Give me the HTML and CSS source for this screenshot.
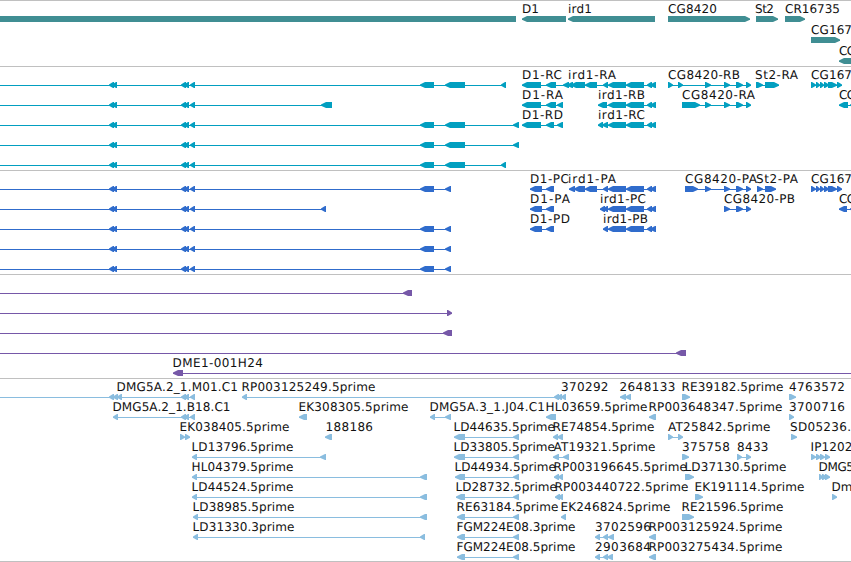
FILE: index.html
```html
<!DOCTYPE html>
<html lang="en">
<head>
  <meta charset="UTF-8" />
  <title>Genome Browser</title>
  <link rel="stylesheet" href="styles.css">
</head>
<body>

  <main class="browser">
    <section class="track genes" id="genes"></section>
    <section class="track transcripts" id="transcripts"></section>
    <section class="track proteins" id="proteins"></section>
    <section class="track clones" id="clones"></section>
    <section class="track ests" id="ests"></section>
  </main>

  <script src="tracks.js"></script>
</body>
</html>
```
FILE: styles.css
```css
body {
  margin: 0;
  background-color: #fff;
  font-family: 'DejaVu Sans', sans-serif;
}

.browser {
  display: flex;
  flex-direction: column;
  width: 851px;
  height: 562px;
  overflow: hidden;
}

.track {
  box-sizing: border-box;
  height: 104px;
  border-top: 1px solid #c0c0c0;
}

.track svg {
  display: block;
  width: 100%;
  height: 100%;
}

.track text {
  fill: #111;
  font-size: 12px;
  text-rendering: geometricPrecision;
}

.track rect,
.track polygon {
  fill: currentColor;
}

.genes {
  height: 66px;
  color: #408e93;
}

.transcripts {
  color: #029fc0;
}

.proteins {
  color: #306ccc;
}

.clones {
  color: #7658a8;
}

.ests {
  height: 184px;
  border-bottom: 1px solid #c0c0c0;
  color: #8abddf;
}
```
FILE: tracks.js
```js
const NS = 'http://www.w3.org/2000/svg';

// exons shared by several features
const LEFT = [[109, 114], [112, 117], [181, 186], [184, 189], [190, 195]];
const MID = [[420, 434], [445, 465]];
const IRD = [[608, 626], [626, 644], [647, 652], [650, 656]];
const CG = [[705, 711], [724, 730], [736, 743], [746, 751]];
const CG167 = [[811, 816], [816, 820], [820, 824], [824, 829], [828, 837], [837, 842]];

// feature: [row, direction, exons, label, label start, label end, line start, line end]
const tracks = {
  genes: { top: 15, step: 21, features: [
    [0, 0, [[0, 516]]],
    [0, -1, [[522, 566]], 'D1', 522, 539],
    [0, -1, [[568, 655]], 'ird1', 568, 592],
    [0, 1, [[668, 750]], 'CG8420', 668, 717],
    [0, 1, [[756, 778]], 'St2', 755, 774],
    [0, 1, [[785, 805]], 'CR16735', 785, 840],
    [1, 1, [[811, 840]], 'CG167', 811, 852],
    [2, -1, [[839, 861]], 'CG', 839, 856]
  ]},

  transcripts: { top: 15, step: 20, features: [
    [0, -1, [...LEFT, ...MID, [501, 506]], '', 0, 0, 0, 506],
    [1, -1, [...LEFT, [321, 332]], '', 0, 0, 0, 332],
    [2, -1, [...LEFT, ...MID, [513, 519]], '', 0, 0, 0, 519],
    [3, -1, [...LEFT, ...MID, [513, 519]], '', 0, 0, 0, 519],
    [4, -1, [...LEFT, ...MID, [501, 506]], '', 0, 0, 0, 506],
    [0, -1, [[522, 541], [546, 556]], 'D1-RC', 522, 562, 522, 566],
    [1, -1, [[522, 541], [546, 556], [557, 563]], 'D1-RA', 522, 563],
    [2, -1, [[522, 541], [546, 554], [557, 563]], 'D1-RD', 522, 563],
    [0, -1, [[563, 569], [567, 573], [571, 585], [585, 597], [603, 608], ...IRD], 'ird1-RA', 568, 616],
    [1, -1, [[598, 607], ...IRD], 'ird1-RB', 598, 645],
    [2, -1, [[598, 603], [602, 608], ...IRD], 'ird1-RC', 598, 645],
    [0, 1, [[668, 673], [678, 683], ...CG], 'CG8420-RB', 668, 740],
    [1, 1, [[682, 700], ...CG], 'CG8420-RA', 682, 755],
    [0, 1, [[756, 763], [765, 779]], 'St2-RA', 755, 798],
    [0, 1, CG167, 'CG167', 811, 852],
    [1, -1, [[839, 848], [850, 860]], 'CG', 839, 856]
  ]},

  proteins: { top: 15, step: 20, features: [
    [0, -1, [...LEFT, [420, 434], [445, 451]], '', 0, 0, 0, 451],
    [1, -1, [...LEFT, [321, 326]], '', 0, 0, 0, 326],
    [2, -1, [...LEFT, [420, 434], [445, 451]], '', 0, 0, 0, 451],
    [3, -1, [...LEFT, [420, 434], [445, 451]], '', 0, 0, 0, 451],
    [4, -1, [...LEFT, [420, 434], [445, 451]], '', 0, 0, 0, 451],
    [0, -1, [[530, 542], [546, 554]], 'D1-PC', 530, 569],
    [1, -1, [[530, 542], [546, 554]], 'D1-PA', 530, 570],
    [2, -1, [[530, 542], [546, 554]], 'D1-PD', 530, 570],
    [0, -1, [[569, 575], [574, 585], [585, 597], [603, 608], ...IRD], 'ird1-PA', 568, 616],
    [1, -1, [[600, 605], [603, 608], ...IRD], 'ird1-PC', 600, 646],
    [2, -1, [[603, 608], ...IRD], 'ird1-PB', 603, 648],
    [0, 1, [[685, 698], ...CG], 'CG8420-PA', 685, 757],
    [1, 1, CG.slice(1), 'CG8420-PB', 724, 795],
    [0, 1, [[757, 763], [765, 776]], 'St2-PA', 756, 798],
    [0, 1, CG167, 'CG167', 811, 852],
    [1, -1, [[839, 847], [850, 860]], 'CG', 839, 856]
  ]},

  clones: { top: 15, step: 20, features: [
    [0, -1, [[403, 412]], '', 0, 0, 0, 412],
    [1, 1, [[447, 452]], '', 0, 0, 0, 452],
    [2, -1, [[443, 452]], '', 0, 0, 0, 452],
    [3, -1, [[676, 686]], '', 0, 0, 0, 686],
    [4, -1, [[173, 183]], 'DME1-001H24', 172.5, 263, 173, 851]
  ]},

  ests: { top: 15, step: 20, features: [
    [0, -1, [[109, 114], [113, 118], [117, 122], [181, 186], [184, 189], [190, 195]], 'DMG5A.2_1.M01.C1', 116.5, 238, 0, 195],
    [0, -1, [[242, 247], [554, 559], [557, 562], [561, 566]], 'RP003125249.5prime', 241.5, 375.5],
    [0, 0, [], '370292', 561, 608.5],
    [0, -1, [[620, 626], [625, 631]], '2648133', 619.5, 675.5],
    [0, 1, [[682, 690]], 'RE39182.5prime', 681.5, 783.5],
    [0, 1, [[789, 796]], '4763572', 789, 845],

    [1, -1, [[113, 118], [181, 186], [184, 189], [190, 195]], 'DMG5A.2_1.B18.C1', 112.5, 230.5],
    [1, -1, [[299, 307]], 'EK308305.5prime', 298.5, 408.5],
    [1, -1, [[430, 435], [445, 451]], 'DMG5A.3_1.J04.C1', 429.5, 545],
    [1, -1, [[546, 556]], 'HL03659.5prime', 545.5, 647.5],
    [1, -1, [[649, 656]], 'RP003648347.5prime', 648.5, 782.5],
    [1, 1, [[789, 794]], '3700716', 789, 845],

    [2, 1, [[180, 185], [185, 190]], 'EK038405.5prime', 179.5, 289.5],
    [2, -1, [[325, 332]], '188186', 325.5, 373],
    [2, -1, [[454, 465], [513, 519]], 'LD44635.5prime', 453.5, 555],
    [2, -1, [[553, 558], [557, 563]], 'RE74854.5prime', 552.5, 654.5],
    [2, 1, [[668, 673], [678, 683]], 'AT25842.5prime', 668, 770.5],
    [2, 1, [[791, 797]], 'SD05236.', 790, 851],

    [3, -1, [[192, 197], [320, 326]], 'LD13796.5prime', 191.5, 293.5],
    [3, -1, [[454, 465], [513, 519]], 'LD33805.5prime', 453.5, 555],
    [3, -1, [[553, 559], [563, 569]], 'AT19321.5prime', 553.5, 655.5],
    [3, 1, [[682, 689]], '375758', 682, 730],
    [3, 1, [[737, 742], [746, 751]], '8433', 737, 768.5],
    [3, 1, [[811, 816], [816, 821], [820, 825], [825, 830]], 'IP1202', 810.5, 852.5],

    [4, -1, [[192, 197], [420, 427]], 'HL04379.5prime', 191.5, 293.5],
    [4, -1, [[455, 465], [513, 519]], 'LD44934.5prime', 454.5, 556],
    [4, -1, [[554, 559], [558, 563]], 'RP003196645.5prime', 553.5, 687],
    [4, 1, [[685, 694]], 'LD37130.5prime', 684.5, 786.5],
    [4, 1, [[819, 823], [822, 827], [825, 830]], 'DMG5', 818.5, 854],

    [5, -1, [[192, 197], [420, 427]], 'LD44524.5prime', 191.5, 293.5],
    [5, -1, [[456, 465], [513, 519]], 'LD28732.5prime', 455.5, 557],
    [5, -1, [[555, 560], [558, 563]], 'RP003440722.5prime', 554.5, 688.5],
    [5, 1, [[695, 703]], 'EK191114.5prime', 694.5, 804.5],
    [5, 1, [[832, 837]], 'Dm', 831.5, 852.5],

    [6, -1, [[193, 198], [420, 427]], 'LD38985.5prime', 192.5, 294.5],
    [6, -1, [[457, 465], [513, 519]], 'RE63184.5prime', 456.5, 558.5],
    [6, -1, [[561, 566]], 'EK246824.5prime', 560.5, 670.5],
    [6, 1, [[682, 694]], 'RE21596.5prime', 681.5, 783.5],

    [7, -1, [[193, 198], [420, 425]], 'LD31330.3prime', 192.5, 294.5],
    [7, -1, [[457, 465], [513, 519]], 'FGM224E08.3prime', 456.5, 575.5],
    [7, -1, [[595, 600], [603, 608], [608, 614]], '3702596', 595, 651],
    [7, -1, [[649, 656]], 'RP003125924.5prime', 648.5, 782.5],

    [8, -1, [[457, 465], [513, 519]], 'FGM224E08.5prime', 456.5, 575.5],
    [8, -1, [[595, 600], [603, 608], [607, 613]], '2903684', 595, 651],
    [8, -1, [[649, 656]], 'RP003275434.5prime', 648.5, 782.5]
  ]}
};

function add(svg, name, attrs) {
  const el = document.createElementNS(NS, name);
  for (const key in attrs) el.setAttribute(key, attrs[key]);
  svg.appendChild(el);
  return el;
}

function drawExon(svg, a, b, y, dir) {
  if (dir === 0) {
    add(svg, 'rect', { x: a, y: y, width: b - a, height: 6 });
    return;
  }
  const tip = dir < 0 ? a : b;
  const end = dir < 0 ? b : a;
  const neck = tip - dir * Math.min(5, b - a - 1);
  add(svg, 'polygon', {
    points: `${tip},${y + 2.4} ${neck},${y} ${end},${y} ${end},${y + 6} ${neck},${y + 6} ${tip},${y + 3.8}`
  });
}

for (const id in tracks) {
  const track = tracks[id];
  const svg = add(document.getElementById(id), 'svg', {});

  for (const [row, dir, exons, label, x0, x1, from, to] of track.features) {
    const y = track.top + row * track.step;

    if (exons.length) {
      const start = from === undefined ? exons[0][0] : from;
      const stop = to === undefined ? exons[exons.length - 1][1] : to;
      add(svg, 'rect', { x: start, y: y + 3, width: stop - start, height: 1 });
    }
    for (const [a, b] of exons) drawExon(svg, a, b, y, dir);

    if (label) {
      const text = add(svg, 'text', { x: x0, y: y - 3, textLength: x1 - x0 });
      text.textContent = label;
    }
  }
}
```
